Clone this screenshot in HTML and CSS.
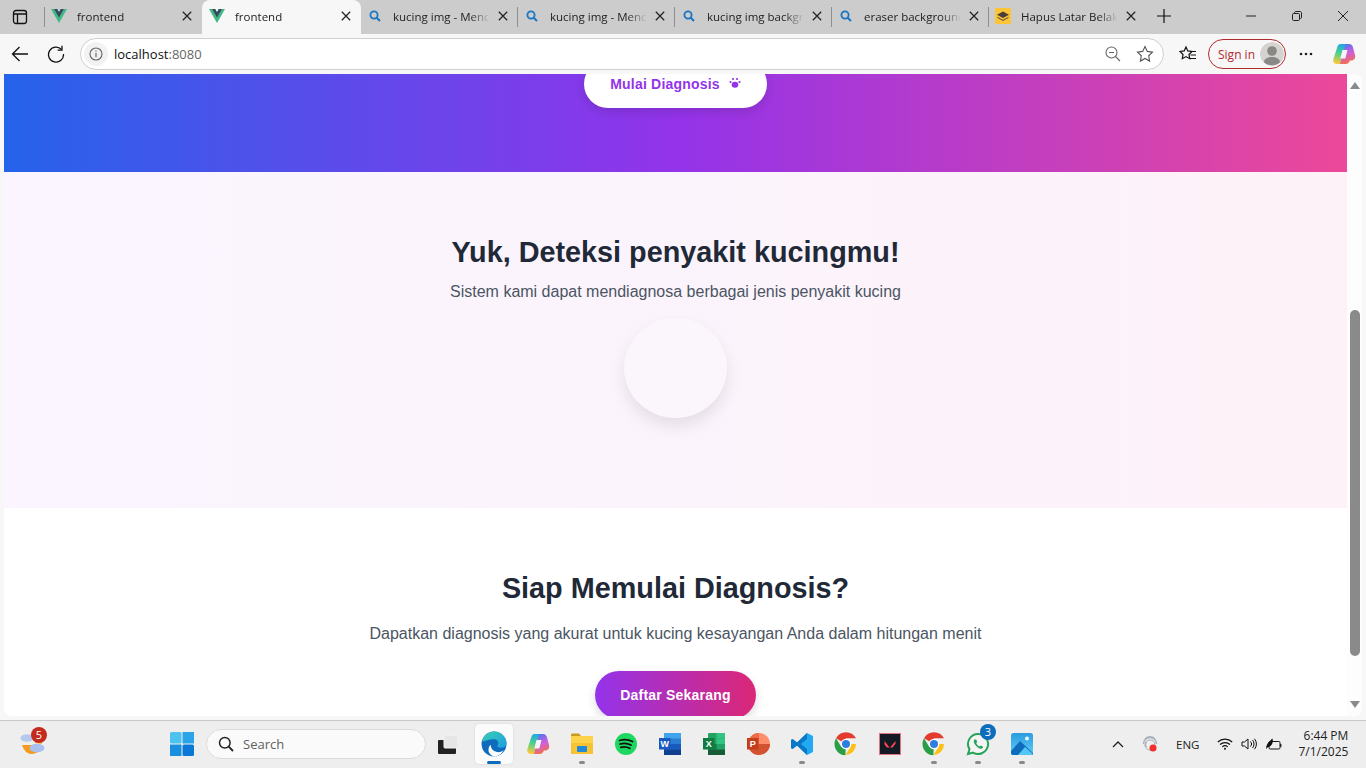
FILE: index.html
```html
<!DOCTYPE html>
<html lang="en">
<head>
    <meta charset="UTF-8">
    <meta name="viewport" content="width=device-width, initial-scale=1.0">
    <title>frontend</title>
    <link rel="stylesheet" href="styles.css">
</head>
<body>
    <svg class="defs" width="0" height="0">
        <defs>
            <symbol id="vue" viewBox="0 0 256 221">
                <path d="M204.8 0H256L128 220.8 0 0h97.92L128 51.2 157.44 0h47.36z" fill="#41b883"/>
                <path d="M50.56 0L128 133.12 204.8 0h-47.36L128 51.2 97.92 0H50.56z" fill="#35495e"/>
            </symbol>
            <symbol id="find" viewBox="0 0 12 12">
                <circle cx="5" cy="5" r="3.6" fill="none" stroke="#1b76c4" stroke-width="1.8"/>
                <path d="M7.7 7.7L11 11" stroke="#1b76c4" stroke-width="2"/>
            </symbol>
            <symbol id="close" viewBox="0 0 10 10">
                <path d="M.8.8l8.4 8.4M9.2.8L.8 9.2" stroke="#222" stroke-width="1.25" fill="none"/>
            </symbol>
            <symbol id="chrome-logo" viewBox="0 0 36 36">
                <path d="M18 18L3 9.5A17 17 0 0 1 33 9.5H18z" fill="#e33b2e"/>
                <path d="M18 18h15A17 17 0 0 1 17 35l8-13z" fill="#fbc116"/>
                <path d="M18 18l-1 17A17 17 0 0 1 3 9.5l8 13z" fill="#2a9d46"/>
                <circle cx="18" cy="18" r="8" fill="#fff"/>
                <circle cx="18" cy="18" r="6" fill="#2f7de1"/>
            </symbol>
            <linearGradient id="copilot-a" x1=".6" y1="0" x2=".4" y2="1">
                <stop offset="0" stop-color="#1fa6ea"/>
                <stop offset=".5" stop-color="#4fd08a"/>
                <stop offset="1" stop-color="#fbc93a"/>
            </linearGradient>
            <linearGradient id="copilot-b" x1=".3" y1="0" x2=".6" y2="1">
                <stop offset="0" stop-color="#4a74f0"/>
                <stop offset=".5" stop-color="#d05fdc"/>
                <stop offset="1" stop-color="#f5703c"/>
            </linearGradient>
            <symbol id="copilot" viewBox="0 0 24 24">
                <path d="M8.500 2H16L10.500 22H5C2 22 .6 19.600 1.400 17L5 6C5.700 3.500 6.700 2 8.500 2z" fill="url(#copilot-a)"/>
                <path d="M13.500 2H17c2 0 3.300 1.200 3.900 3L23 13c.8 3-1 5.500-3.700 5.500H18C17 21 15.500 22 13.500 22H8z" fill="url(#copilot-b)"/>
                <path d="M10.500 8h5l-2.200 8.500h-5z" fill="#f7f3f6"/>
            </symbol>
        </defs>
    </svg>

    <div class="tabstrip">
        <div class="sidebar-btn">
            <svg class="ico-16" viewBox="0 0 16 16"><rect x="1.500" y="1.500" width="13" height="13" rx="2.500" fill="none" stroke="#111" stroke-width="1.300"/><path d="M1.500 5h13M5.500 5v9" stroke="#111" stroke-width="1.300"/></svg>
        </div>
        <div class="tab tab-first">
            <svg class="favicon"><use href="#vue"/></svg>
            <span class="tab-title">frontend</span>
            <svg class="tab-close"><use href="#close"/></svg>
        </div>
        <div class="tab tab-active">
            <svg class="favicon"><use href="#vue"/></svg>
            <span class="tab-title">frontend</span>
            <svg class="tab-close"><use href="#close"/></svg>
        </div>
        <div class="tab tab-search">
            <svg class="favicon-find"><use href="#find"/></svg>
            <span class="tab-title">kucing img - Mencari</span>
            <svg class="tab-close"><use href="#close"/></svg>
        </div>
        <div class="tab tab-search">
            <svg class="favicon-find"><use href="#find"/></svg>
            <span class="tab-title">kucing img - Mencari</span>
            <svg class="tab-close"><use href="#close"/></svg>
        </div>
        <div class="tab tab-search">
            <svg class="favicon-find"><use href="#find"/></svg>
            <span class="tab-title">kucing img background</span>
            <svg class="tab-close"><use href="#close"/></svg>
        </div>
        <div class="tab tab-search">
            <svg class="favicon-find"><use href="#find"/></svg>
            <span class="tab-title">eraser background</span>
            <svg class="tab-close"><use href="#close"/></svg>
        </div>
        <div class="tab tab-first">
            <svg class="favicon favicon-square" viewBox="0 0 16 16"><rect width="16" height="16" rx="1" fill="#fcc537"/><path d="M8 3.500l6 3.300-6 3.300-6-3.300z" fill="#4a3f35"/><path d="M2.500 8.800L8 11.800l5.500-3V10L8 13 2.500 10z" fill="#6b5b45"/></svg>
            <span class="tab-title">Hapus Latar Belakang</span>
            <svg class="tab-close"><use href="#close"/></svg>
        </div>
        <svg class="new-tab" viewBox="0 0 14 14"><path d="M7 0v14M0 7h14" stroke="#111" stroke-width="1.200"/></svg>
        <div class="window-controls">
            <svg class="ico-10" viewBox="0 0 10 10"><path d="M0 5h10" stroke="#222"/></svg>
            <svg class="ico-10" viewBox="0 0 10 10"><rect x=".5" y="2.500" width="7" height="7" rx="1.200" fill="none" stroke="#222"/><path d="M2.500 2.500V1.700C2.500 1 3 .5 3.700 .5H8c.9 0 1.500.6 1.500 1.500v4.300c0 .7-.5 1.200-1.200 1.200" fill="none" stroke="#222"/></svg>
            <svg class="ico-10" viewBox="0 0 10 10"><path d="M0 0l10 10M10 0L0 10" stroke="#222"/></svg>
        </div>
    </div>

    <div class="toolbar">
        <svg class="nav-icon" viewBox="0 0 18 18"><path d="M17 9H1.500M8.500 2L1.500 9l7 7" fill="none" stroke="#111" stroke-width="1.300"/></svg>
        <svg class="nav-icon reload" viewBox="0 0 18 18"><path d="M14.500 4.500A7.500 7.500 0 1 0 16.500 9" fill="none" stroke="#111" stroke-width="1.300"/><path d="M15 .8v4.400h-4.400" fill="none" stroke="#111" stroke-width="1.300"/></svg>
        <div class="address-bar">
            <span class="info-btn">
                <svg class="ico-14" viewBox="0 0 14 14"><circle cx="7" cy="7" r="6" fill="none" stroke="#666" stroke-width="1.100"/><path d="M7 6v4.200M7 3.600v1.200" stroke="#666" stroke-width="1.200"/></svg>
            </span>
            <span class="url">localhost<span class="url-port">:8080</span></span>
            <svg class="bar-icon" viewBox="0 0 16 16"><circle cx="6.500" cy="6.500" r="5.500" fill="none" stroke="#666" stroke-width="1.100"/><path d="M10.500 10.500L15 15M4 6.500h5" stroke="#666" stroke-width="1.100"/></svg>
            <svg class="bar-icon star" viewBox="0 0 18 18"><path d="M9 1.500l2.300 4.900 5.200.7-3.800 3.700.9 5.300L9 13.500l-4.600 2.600.9-5.300L1.500 7.100l5.200-.7z" fill="none" stroke="#555" stroke-width="1.100"/></svg>
        </div>
        <svg class="fav-icon" viewBox="0 0 18 18"><path d="M7 2l1.800 3.900 4.200.6-3 3 .7 4.200L7 11.600l-3.700 2.100.7-4.200-3-3 4.200-.6z" fill="none" stroke="#111" stroke-width="1.200"/><path d="M11.500 6.500H17M11.500 10H17M10 13.500h7" stroke="#111" stroke-width="1.100"/></svg>
        <div class="sign-in">
            <span>Sign in</span>
            <span class="avatar">
                <svg class="ico-24" viewBox="0 0 24 24"><circle cx="12" cy="12" r="12" fill="#d5d3d0"/><circle cx="12" cy="9" r="4.800" fill="#8a8886"/><path d="M3.800 20c.8-3.500 4-5 8.200-5s7.400 1.500 8.200 5a12 12 0 0 1-16.400 0z" fill="#8a8886"/></svg>
            </span>
        </div>
        <svg class="more-icon" viewBox="0 0 14 4"><circle cx="2" cy="2" r="1.300" fill="#222"/><circle cx="7" cy="2" r="1.300" fill="#222"/><circle cx="12" cy="2" r="1.300" fill="#222"/></svg>
        <svg class="copilot-btn"><use href="#copilot"/></svg>
    </div>

    <div class="viewport">
        <main class="page">
            <section class="hero">
                <a class="hero-btn">
                    <span>Mulai Diagnosis</span>
                    <svg class="paw" viewBox="0 0 12 12"><ellipse cx="6" cy="7.800" rx="3.300" ry="3" fill="#9333ea"/><circle cx="1.500" cy="5" r="1.100" fill="#9333ea"/><circle cx="4" cy="2" r="1.100" fill="#9333ea"/><circle cx="8" cy="2" r="1.100" fill="#9333ea"/><circle cx="10.500" cy="5" r="1.100" fill="#9333ea"/></svg>
                </a>
            </section>
            <section class="detect">
                <h2>Yuk, Deteksi penyakit kucingmu!</h2>
                <p>Sistem kami dapat mendiagnosa berbagai jenis penyakit kucing</p>
                <div class="detect-circle"></div>
            </section>
            <section class="cta">
                <h2>Siap Memulai Diagnosis?</h2>
                <p>Dapatkan diagnosis yang akurat untuk kucing kesayangan Anda dalam hitungan menit</p>
                <a class="cta-btn">Daftar Sekarang</a>
            </section>
        </main>
        <div class="scrollbar">
            <span class="arrow-up"></span>
            <div class="track"><div class="thumb"></div></div>
            <span class="arrow-down"></span>
        </div>
    </div>

    <footer class="taskbar">
        <div class="widget">
            <svg class="ico-26" viewBox="0 0 26 26">
                <path d="M14 12l7-4 1 5z" fill="#f6b93b"/>
                <path d="M2 14h19c0 5-4 9-9.500 9C7 23 3.500 19 2 14z" fill="#f39a1f"/>
                <ellipse cx="7" cy="7" rx="6.500" ry="3.800" fill="#b5c9ef"/>
                <ellipse cx="17" cy="17" rx="7.500" ry="4.300" fill="#a9c1ef"/>
            </svg>
            <span class="badge badge-red">5</span>
        </div>
        <svg class="start" viewBox="0 0 24 24">
            <rect x="0" y="0" width="11.500" height="11.500" rx="1.500" fill="#4cc2f1"/>
            <rect x="12.500" y="0" width="11.500" height="11.500" fill="#2aa3e8"/>
            <rect x="0" y="12.500" width="11.500" height="11.500" fill="#1b8fdf"/>
            <rect x="12.500" y="12.500" width="11.500" height="11.500" rx="1.500" fill="#0a78d4"/>
        </svg>
        <div class="search-box">
            <svg class="ico-16" viewBox="0 0 16 16"><circle cx="6.800" cy="6.800" r="5.300" fill="none" stroke="#222" stroke-width="1.500"/><path d="M10.700 10.700L15 15" stroke="#222" stroke-width="1.800"/></svg>
            <span>Search</span>
        </div>
        <svg class="task-view" viewBox="0 0 20 20"><rect x="0" y="6" width="18" height="14" rx="1" fill="#222"/><rect x="6" y="1" width="14" height="13" rx="1" fill="#e6e6e6" stroke="#f5f5f5"/></svg>
        <div class="apps">
            <div class="app app-active">
                <svg class="ico-26" viewBox="0 0 24 24">
                    <defs><linearGradient id="edge-a" x1="0" y1="0" x2="1" y2="1"><stop offset="0" stop-color="#3ad0b0"/><stop offset="1" stop-color="#1b9de2"/></linearGradient></defs>
                    <circle cx="12" cy="12" r="11.500" fill="#0f6cbd"/>
                    <path d="M1 10C2 4 7 .5 12 .5c6 0 11.500 4.500 11.500 10.500 0 3-2.500 4.500-5 4.500-2 0-3.500-.8-3.500-1.800 2-1.700 1-6-3-6-5 0-8 2-11 2z" fill="url(#edge-a)"/>
                    <path d="M9 13c0 4 3.500 6.500 7 6.500 2 0 4-.8 5-2-2 4-5.500 6-9 6-1 0-6-3-5-7 .2-1.500 1-3 2-3.500z" fill="#fff"/>
                </svg>
                <span class="active-bar"></span>
            </div>
            <div class="app"><svg class="ico-24"><use href="#copilot"/></svg></div>
            <div class="app app-open">
                <svg class="ico-24" viewBox="0 0 24 24"><path d="M1 3c0-1 .6-1.500 1.500-1.500H9l2 2.500H1z" fill="#c99a1f"/><path d="M1 4h22v18H1z" fill="#fcd34a"/><path d="M1 11h22v11H1z" fill="#f8c332"/><rect x="7" y="14" width="10" height="6" rx="1" fill="#1f8ad8"/></svg>
            </div>
            <div class="app">
                <svg class="ico-24" viewBox="0 0 24 24"><circle cx="12" cy="12" r="11" fill="#1ed760"/><path d="M5.500 8.500c4-1.200 9-1 13 1M6 12c3.500-1 7.500-.8 11 1M6.800 15.300c3-.8 6-.6 9 1" fill="none" stroke="#111" stroke-width="1.800" stroke-linecap="round"/></svg>
            </div>
            <div class="app">
                <svg class="ico-24" viewBox="0 0 24 24"><rect x="6" y="1" width="17" height="22" rx="1" fill="#2b7cd3"/><rect x="6" y="1" width="17" height="5.500" fill="#41a5ee"/><rect x="6" y="12" width="17" height="5.500" fill="#185abd"/><rect x="6" y="17.500" width="17" height="5.500" fill="#103f91"/><rect x="1" y="6" width="11.500" height="11.500" fill="#185abd"/><text class="app-letter" x="6.700" y="15">W</text></svg>
            </div>
            <div class="app">
                <svg class="ico-24" viewBox="0 0 24 24"><rect x="6" y="1" width="17" height="22" rx="1" fill="#21a366"/><rect x="14.500" y="1" width="8.500" height="5.500" fill="#33c481"/><rect x="6" y="12" width="8.500" height="5.500" fill="#107c41"/><rect x="14.500" y="6.500" width="8.500" height="5.500" fill="#33c481"/><rect x="6" y="17.500" width="17" height="5.500" fill="#185c37"/><rect x="1" y="6" width="11.500" height="11.500" fill="#107c41"/><text class="app-letter" x="6.700" y="15">X</text></svg>
            </div>
            <div class="app">
                <svg class="ico-24" viewBox="0 0 24 24"><circle cx="13" cy="12" r="11" fill="#ff8f6b"/><path d="M13 12h11a11 11 0 0 1-22 0z" fill="#d35230"/><path d="M13 1a11 11 0 0 0-11 11h11z" fill="#ed6c47"/><rect x="1" y="6" width="11.500" height="11.500" fill="#c43e1c"/><text class="app-letter" x="6.700" y="15">P</text></svg>
            </div>
            <div class="app app-open">
                <svg class="ico-24" viewBox="0 0 24 24"><path d="M17 1l6 3v16l-6 3L7 13.500 2.500 17 1 16v-8l1.500-1L7 10.500z" fill="#23a9f2"/><path d="M17 1L7 10.500 2.500 7 1 8v8l1.500 1L7 13.500 17 23V17l-6-5 6-5z" fill="#0a78c4"/></svg>
            </div>
            <div class="app"><svg class="ico-24"><use href="#chrome-logo"/></svg></div>
            <div class="app">
                <svg class="ico-24" viewBox="0 0 24 24"><rect x="1.500" y="1.500" width="21" height="21" fill="#141a24" stroke="#e0737d" stroke-width="1"/><path d="M6.500 9l5 6.500H9L6.500 12.500zM17.500 9v2.800l-3 3.700H12z" fill="#ff4655"/></svg>
            </div>
            <div class="app app-open"><svg class="ico-24"><use href="#chrome-logo"/></svg></div>
            <div class="app app-open">
                <svg class="ico-24" viewBox="0 0 24 24"><path d="M12 2a10 10 0 0 0-8.500 15.200L2 22l5-1.400A10 10 0 1 0 12 2z" fill="#f4f4f4" stroke="#25a35a" stroke-width="2"/><path d="M8.500 7.500c-1 1-1 2.800.5 5s3.500 4 5.500 4.300c1.500.2 2.500-.8 2.600-2l-2.400-1.300-1 1.100c-1.500-.5-3-2-3.500-3.500l1-1-1-2.500z" fill="#25a35a"/></svg>
                <span class="badge badge-blue">3</span>
            </div>
            <div class="app app-open">
                <svg class="ico-24" viewBox="0 0 24 24"><defs><linearGradient id="photos-a" x1="0" y1="0" x2="0" y2="1"><stop offset="0" stop-color="#2b9be0"/><stop offset="1" stop-color="#5fd0f5"/></linearGradient></defs><rect x="1" y="1" width="22" height="22" rx="2.500" fill="url(#photos-a)"/><circle cx="17" cy="6.500" r="2" fill="#e8f6ff"/><path d="M1 19l9-10 13 12v.500c0 1-.5 1.500-1.500 1.500H3c-1 0-2-.5-2-2z" fill="#0f6cbd"/><path d="M8 23l7-8 8 7c-.3.700-.8 1-1.500 1z" fill="#55c6f2"/></svg>
            </div>
        </div>
        <div class="tray">
            <svg class="tray-chevron" viewBox="0 0 12 7"><path d="M1 6l5-5 5 5" fill="none" stroke="#222" stroke-width="1.300"/></svg>
            <svg class="tray-app" viewBox="0 0 16 18"><path d="M3 4c3-3 7-3 10 0M1.500 9a6.500 6.500 0 0 1 13 0M4.500 12a3.500 3.500 0 0 1 0-5" fill="none" stroke="#aab3bd" stroke-width="1.500"/><circle cx="8" cy="10" r="5" fill="none" stroke="#aab3bd"/><circle cx="11" cy="13" r="3.500" fill="#f0302c"/></svg>
            <span class="tray-lang">ENG</span>
            <svg class="tray-wifi" viewBox="0 0 16 12"><path d="M.8 4a10.500 10.500 0 0 1 14.400 0M3 6.500a7.500 7.500 0 0 1 10 0M5.300 8.800a4 4 0 0 1 5.400 0" fill="none" stroke="#111" stroke-width="1.100"/><circle cx="8" cy="10.800" r="1" fill="#111"/></svg>
            <svg class="tray-sound" viewBox="0 0 16 12"><path d="M1 4h2.500L7 1v10L3.500 8H1z" fill="none" stroke="#111"/><path d="M9.500 3.500a3.500 3.500 0 0 1 0 5M11.500 2a6 6 0 0 1 0 8M13.500.8a8 8 0 0 1 0 10.400" fill="none" stroke="#111"/></svg>
            <svg class="tray-battery" viewBox="0 0 17 13"><rect x="4" y="3.500" width="11" height="7.500" rx="1.200" fill="none" stroke="#111"/><path d="M15.800 6v3" stroke="#111" stroke-width="1.200"/><path d="M1 11c0-4 2-7 6.500-10.500 1 4-.5 8-4.500 8.500z" fill="#111"/></svg>
            <div class="clock">
                <span>6:44 PM</span>
                <span>7/1/2025</span>
            </div>
        </div>
    </footer>
</body>
</html>
```

FILE: styles.css
```css
* {
    box-sizing: border-box;
}
body {
    margin: 0;
    width: 1366px;
    height: 768px;
    overflow: hidden;
    display: flex;
    flex-direction: column;
    background-color: #f7f7f7;
    font-family: "Liberation Sans", Arial, sans-serif;
}
.defs {
    position: absolute;
}
svg {
    display: block;
    flex-shrink: 0;
}
.ico-10 { width: 10px; height: 10px; }
.ico-14 { width: 14px; height: 14px; }
.ico-16 { width: 16px; height: 16px; }
.ico-24 { width: 24px; height: 24px; }
.ico-26 { width: 26px; height: 26px; }

/* browser tabs */
.tabstrip {
    height: 34px;
    display: flex;
    background-color: #cccccc;
    font-family: "Open Sans", sans-serif;
    font-size: 11.5px;
    color: #222;
}
.sidebar-btn {
    width: 45px;
    display: flex;
    align-items: center;
    padding-left: 12px;
}
.tab {
    position: relative;
    width: 157px;
    display: flex;
    align-items: center;
    padding: 0 0 2px 6px;
}
.tab::before {
    content: "";
    position: absolute;
    left: -1px;
    top: 7px;
    height: 20px;
    width: 1px;
    background-color: #8f8f8f;
}
.tab-active {
    width: 159px;
    padding-left: 7px;
    background-color: #f7f7f7;
    border-radius: 8px 8px 0 0;
}
.tab-active::before,
.tab-active + .tab::before {
    display: none;
}
.favicon {
    width: 16px;
    height: 14px;
    margin-right: 10px;
}
.favicon-square {
    height: 16px;
}
.favicon-find {
    width: 12px;
    height: 12px;
    margin: 0 12px 0 2px;
}
.tab-title {
    flex: 1;
    min-width: 0;
    overflow: hidden;
    white-space: nowrap;
    -webkit-mask-image: linear-gradient(to left, transparent 0, #000 20px);
    mask-image: linear-gradient(to left, transparent 0, #000 20px);
}
.tab-close {
    width: 10px;
    height: 10px;
    margin: 0 10px 0 8px;
}
.new-tab {
    width: 14px;
    height: 14px;
    margin: 9px 0 0 11px;
}
.window-controls {
    margin-left: auto;
    display: flex;
    align-items: center;
    gap: 36px;
    padding: 0 18px 2px 0;
}

/* toolbar */
.toolbar {
    height: 40px;
    display: flex;
    align-items: center;
    padding-left: 11px;
}
.nav-icon {
    width: 18px;
    height: 18px;
}
.reload {
    margin-left: 18px;
}
.address-bar {
    width: 1084px;
    height: 32px;
    margin-left: 15px;
    display: flex;
    align-items: center;
    background-color: #fff;
    border: 1px solid #cfcfcf;
    border-radius: 16px;
    padding-left: 3px;
}
.info-btn {
    width: 24px;
    height: 24px;
    border-radius: 50%;
    background-color: #f2f2f2;
    display: flex;
    align-items: center;
    justify-content: center;
}
.url {
    margin-left: 6px;
    flex: 1;
    font-family: "Open Sans", sans-serif;
    font-size: 13px;
    color: #111;
}
.url-port {
    color: #666;
}
.bar-icon {
    width: 16px;
    height: 16px;
}
.star {
    width: 18px;
    height: 18px;
    margin: 0 9px 0 15px;
}
.fav-icon {
    width: 18px;
    height: 18px;
    margin-left: 15px;
}
.sign-in {
    width: 78px;
    height: 30px;
    margin-left: 11px;
    display: flex;
    align-items: center;
    justify-content: space-between;
    padding: 0 1px 0 9px;
    border: 1px solid #b02a2e;
    border-radius: 15px;
    font-family: "Open Sans", sans-serif;
    font-size: 12px;
    color: #b02a2e;
}
.avatar {
    display: block;
}
.avatar svg {
    border-radius: 50%;
}
.more-icon {
    width: 14px;
    height: 4px;
    margin-left: 13px;
}
.copilot-btn {
    width: 24px;
    height: 24px;
    margin-left: 19px;
}

/* the page in the browser */
.viewport {
    height: 642px;
    margin: 0 4px;
    display: flex;
    background-color: #fff;
    border-radius: 0 8px 8px 8px;
    overflow: hidden;
}
.page {
    flex: 1;
    min-width: 0;
    text-align: center;
    overflow: hidden;
}
.hero {
    height: 98px;
    display: flex;
    justify-content: center;
    align-items: flex-end;
    padding-bottom: 64px;
    background: linear-gradient(to right, #2563eb, #9333ea, #ec4899);
}
.hero-btn {
    width: 183px;
    height: 48px;
    flex-shrink: 0;
    display: flex;
    align-items: center;
    justify-content: center;
    gap: 9px;
    background-color: #fff;
    border-radius: 24px;
    box-shadow: 0 4px 10px rgba(0, 0, 0, 0.12);
    color: #9333ea;
    font-weight: bold;
    font-size: 14px;
    letter-spacing: 0.2px;
}
.paw {
    width: 12px;
    height: 12px;
    margin-bottom: 2px;
}
.detect {
    height: 336px;
    padding-top: 62px;
    background: linear-gradient(to right, #faf5ff, #fdf2f8);
}
h2 {
    margin: 0;
    font-size: 28.8px;
    line-height: 36px;
    color: #1f2937;
}
.detect p,
.cta p {
    margin: 0;
    font-size: 16px;
    line-height: 24px;
    color: #4b5563;
}
.detect p {
    margin-top: 10px;
}
.detect-circle {
    width: 103px;
    height: 100px;
    margin: 14px auto 0;
    border-radius: 50%;
    background-color: #fbf6fc;
    box-shadow: 0 8px 16px rgba(0, 0, 0, 0.09);
}
.cta {
    height: 208px;
    padding-top: 62px;
}
.cta p {
    margin-top: 16px;
}
.cta-btn {
    width: 161px;
    height: 48px;
    margin: 25px auto 0;
    display: flex;
    align-items: center;
    justify-content: center;
    border-radius: 24px;
    background: linear-gradient(to right, #9333ea, #db2777);
    box-shadow: 0 4px 10px rgba(0, 0, 0, 0.15);
    color: #fff;
    font-weight: bold;
    font-size: 14px;
    letter-spacing: 0.2px;
}
.scrollbar {
    width: 15px;
    display: flex;
    flex-direction: column;
    align-items: center;
    background-color: #fdfdfd;
}
.arrow-up,
.arrow-down {
    width: 0;
    height: 0;
    flex-shrink: 0;
    border-left: 5px solid transparent;
    border-right: 5px solid transparent;
}
.arrow-up {
    margin-top: 8px;
    border-bottom: 7px solid #8a8a8a;
}
.arrow-down {
    margin-bottom: 8px;
    border-top: 7px solid #8a8a8a;
}
.track {
    flex: 1;
    width: 100%;
    padding: 221px 2px 0 3px;
}
.thumb {
    height: 346px;
    border-radius: 5px;
    background-color: #8a8a8a;
}

/* windows taskbar */
.taskbar {
    height: 48px;
    margin-top: 4px;
    padding-bottom: 1px;
    display: flex;
    align-items: center;
    background-color: #eeeeee;
    border-top: 1px solid #c9c9c9;
    font-family: "Open Sans", sans-serif;
}
.widget {
    position: relative;
    margin-left: 20px;
}
.badge {
    position: absolute;
    width: 16px;
    height: 16px;
    border-radius: 50%;
    color: #fff;
    font-size: 11px;
    line-height: 16px;
    text-align: center;
}
.badge-red {
    top: -4px;
    right: -1px;
    background-color: #c42b1c;
}
.badge-blue {
    top: 0;
    right: 1px;
    background-color: #0f6cbd;
}
.start {
    width: 24px;
    height: 24px;
    margin-left: 124px;
}
.search-box {
    width: 220px;
    height: 30px;
    margin-left: 12px;
    display: flex;
    align-items: center;
    gap: 9px;
    padding-left: 11px;
    background-color: #fafafa;
    border: 1px solid #dcdcdc;
    border-radius: 15px;
    font-size: 13px;
    color: #5f5f5f;
}
.task-view {
    width: 20px;
    height: 20px;
    margin-left: 12px;
}
.apps {
    display: flex;
    margin-left: 17px;
}
.app {
    position: relative;
    width: 38px;
    height: 40px;
    margin-right: 6px;
    display: flex;
    align-items: center;
    justify-content: center;
    border-radius: 4px;
}
.app-active {
    background-color: #fbfbfb;
    box-shadow: 0 0 2px rgba(0, 0, 0, 0.15);
}
.active-bar {
    position: absolute;
    left: 12px;
    bottom: 0;
    width: 14px;
    height: 3px;
    border-radius: 2px;
    background-color: #0f6cbd;
}
.app-open::after {
    content: "";
    position: absolute;
    left: 16px;
    bottom: 0;
    width: 6px;
    height: 3px;
    border-radius: 2px;
    background-color: #8a8a8a;
}
.app-letter {
    font-family: "Liberation Sans", Arial, sans-serif;
    font-size: 9px;
    font-weight: bold;
    fill: #fff;
    text-anchor: middle;
}
.tray {
    margin-left: 65px;
    display: flex;
    align-items: center;
    color: #222;
}
.tray-chevron {
    width: 12px;
    height: 7px;
}
.tray-app {
    width: 16px;
    height: 18px;
    margin-left: 18px;
}
.tray-lang {
    margin-left: 18px;
    font-size: 11.5px;
}
.tray-wifi {
    width: 16px;
    height: 12px;
    margin-left: 18px;
}
.tray-sound {
    width: 16px;
    height: 12px;
    margin-left: 8px;
}
.tray-battery {
    width: 17px;
    height: 13px;
    margin-left: 8px;
}
.clock {
    margin-left: 16px;
    display: flex;
    flex-direction: column;
    align-items: flex-end;
    font-size: 12px;
    line-height: 16px;
}
```
